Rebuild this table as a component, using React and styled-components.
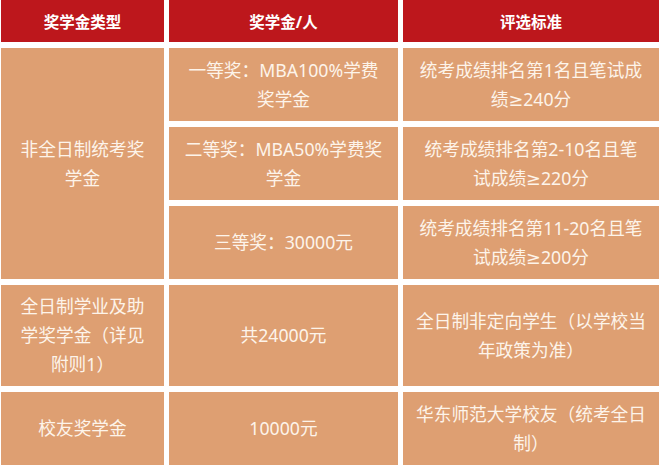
import styled, { createGlobalStyle } from "styled-components";

const GlobalStyle = createGlobalStyle`
  html, body {
    margin: 0;
    padding: 0;
    background: #ffffff;
  }
  body {
    font-family: "Noto Sans", "DejaVu Sans", "Noto Sans CJK SC", sans-serif;
  }
`;

const Table = styled.div`
  display: grid;
  grid-template-columns: 163px 229px 256px;
  grid-template-rows: 42px 73px 73px 73px 101px 73px;
  column-gap: 5px;
  row-gap: 6px;
  padding-left: 1px;
  width: 660px;
  height: 467px;
  box-sizing: border-box;
  overflow: hidden;
`;

const HeadCell = styled.div`
  background: #bd171c;
  color: #ffffff;
  font-weight: 700;
  font-size: 15.5px;
  display: flex;
  align-items: center;
  justify-content: center;
  text-align: center;
`;

const Cell = styled.div`
  grid-row: span ${(p) => p.$span || 1};
  background: #de9f72;
  color: #fdf4ea;
  font-size: 17.7px;
  line-height: 29px;
  white-space: pre-line;
  display: flex;
  align-items: center;
  justify-content: center;
  text-align: center;
  padding: 0 6px;
  box-sizing: border-box;
`;

// line breaks follow the original table
const rows = [
  { type: "非全日制统考奖\n学金", span: 3, amount: "一等奖：MBA100%学费\n奖学金", rule: "统考成绩排名第1名且笔试成\n绩≥240分" },
  { amount: "二等奖：MBA50%学费奖\n学金", rule: "统考成绩排名第2-10名且笔\n试成绩≥220分" },
  { amount: "三等奖：30000元", rule: "统考成绩排名第11-20名且笔\n试成绩≥200分" },
  { type: "全日制学业及助\n学奖学金（详见\n附则1）", amount: "共24000元", rule: "全日制非定向学生（以学校当\n年政策为准）" },
  { type: "校友奖学金", amount: "10000元", rule: "华东师范大学校友（统考全日\n制）" },
];

const App = () => {
  return (
    <>
      <GlobalStyle />
      <Table>
        <HeadCell>奖学金类型</HeadCell>
        <HeadCell>奖学金/人</HeadCell>
        <HeadCell>评选标准</HeadCell>
        {rows.map((r, i) => [
          r.type && (
            <Cell key={"t" + i} $span={r.span}>
              {r.type}
            </Cell>
          ),
          <Cell key={"a" + i}>{r.amount}</Cell>,
          <Cell key={"r" + i}>{r.rule}</Cell>,
        ])}
      </Table>
    </>
  );
};

export default App;
